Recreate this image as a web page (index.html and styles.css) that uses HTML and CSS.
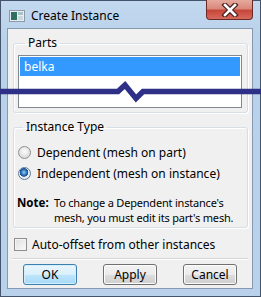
FILE: index.html
```html
<!DOCTYPE html>
<html lang="en">
<head>
    <meta charset="UTF-8">
    <title>Create Instance</title>
    <link rel="stylesheet" href="styles.css">
</head>
<body>
    <div class="window">
        <div class="titlebar">
            <svg class="app-icon" width="16" height="12" viewBox="0 0 16 12">
                <rect x="0.5" y="0.5" width="15" height="11" fill="#e8eef2" stroke="#8c9aa4"/>
                <rect x="2" y="2" width="6" height="8" fill="#2f6f62"/>
                <rect x="9" y="2" width="5" height="3" fill="#a9c3c8"/>
                <rect x="9" y="6" width="5" height="4" fill="#c8d8dc"/>
            </svg>
            <span class="title">Create Instance</span>
            <div class="close-btn">
                <svg width="20" height="14" viewBox="0 0 20 14">
                    <path d="M5 2 L15 12 M15 2 L5 12" stroke="#4a2020" stroke-width="5" stroke-linecap="square"/>
                    <path d="M5 2 L15 12 M15 2 L5 12" stroke="#ffffff" stroke-width="2.6" stroke-linecap="square"/>
                </svg>
            </div>
        </div>
        <div class="client">
            <fieldset class="group parts">
                <legend>Parts</legend>
                <ul class="listbox">
                    <li class="selected">belka</li>
                </ul>
            </fieldset>

            <fieldset class="group type">
                <legend>Instance Type</legend>
                <label class="option"><span class="radio"></span>Dependent (mesh on part)</label>
                <label class="option"><span class="radio checked"></span>Independent (mesh on instance)</label>
                <div class="note">
                    <b>Note:</b>
                    <span>To change a Dependent instance's<br>mesh, you must edit its part's mesh.</span>
                </div>
            </fieldset>

            <label class="option check-row"><span class="checkbox"></span>Auto-offset from other instances</label>

            <div class="separator"></div>

            <div class="buttons">
                <button class="btn btn-default">OK</button>
                <button class="btn">Apply</button>
                <button class="btn">Cancel</button>
            </div>
        </div>

        <!-- break mark drawn over the dialog -->
        <svg class="break-mark" width="261" height="24" viewBox="0 80 261 24">
            <path d="M0 91.5 H118 L125 85 L136 98.5 L143 91.5 H261" fill="none" stroke="#2d3086" stroke-width="5.5"/>
        </svg>
    </div>
</body>
</html>
```

FILE: styles.css
```css
body {
    margin: 0;
    padding: 0;
    font-family: "Noto Sans", sans-serif;
    font-size: 12px;
    color: #000;
}
.window {
    position: relative;
    box-sizing: border-box;
    width: 261px;
    height: 297px;
    border: 1px solid #44546a;
    background: linear-gradient(#c2d8ef, #b9d1ea 40px, #b9d1ea);
    padding: 0 7px 7px 6px;
    display: flex;
    flex-direction: column;
}
.titlebar {
    flex-shrink: 0;
    height: 27px;
    display: flex;
    align-items: center;
    position: relative;
}
.app-icon {
    margin: 3px 6px 0 2px;
}
.title {
    margin-top: 2px;
    font-size: 12px;
}
.close-btn {
    position: absolute;
    top: -1px;
    right: 0;
    width: 47px;
    height: 20px;
    box-sizing: border-box;
    border: 1px solid #6b2a25;
    border-top: none;
    border-radius: 0 0 4px 4px;
    background: linear-gradient(#e6aa9e, #d8897c 45%, #c7463a 55%, #d66a5c);
    display: flex;
    align-items: center;
    justify-content: center;
}
.client {
    flex: 1;
    min-height: 0;
    background: #f0f0f0;
    border: 1px solid #8699b0;
    padding: 0 4px 0 5px;
    display: flex;
    flex-direction: column;
}
.group {
    flex-shrink: 0;
    margin: 0;
    border: 1px solid #d5dfe5;
    border-radius: 3px;
    box-shadow: inset 1px 1px 0 #fff, 1px 1px 0 #fff;
}
.group legend {
    padding: 0 3px;
    margin-left: 7px;
    line-height: 16px;
}
.parts {
    margin-top: 6px;
    padding: 4px 5px 4px 4px;
}
.listbox {
    list-style: none;
    margin: 0;
    padding: 1px;
    height: 49px;
    border: 1px solid #828790;
    background: #fff;
}
.listbox li {
    height: 19px;
    line-height: 19px;
    padding-left: 4px;
}
.listbox .selected {
    background: #3399ff;
    color: #fff;
}
.type {
    margin-top: 6px;
    padding: 7px 4px 2px 2px;
}
.option {
    flex-shrink: 0;
    display: flex;
    align-items: center;
    height: 21px;
}
.radio {
    box-sizing: border-box;
    width: 13px;
    height: 13px;
    margin: 0 6px 0 2px;
    border-radius: 50%;
    border: 1px solid #8f8f8f;
    background: radial-gradient(circle at 50% 40%, #fdfdfd, #dcdcdc 70%, #c8c8c8);
}
.radio.checked {
    border-color: #5e7c99;
    background: radial-gradient(circle at 45% 40%, #9fd4f4 0, #2e7bc3 2.5px, #1d4f8a 4px, #e9eef2 4.6px, #d6dce1);
}
.note {
    display: grid;
    grid-template-columns: 38px 1fr;
    margin-top: 11px;
    line-height: 15px;
    white-space: nowrap;
}
.note b {
    padding-left: 1px;
    font-size: 11.5px;
}
.note span {
    font-size: 11px;
    letter-spacing: -0.2px;
}
.check-row {
    margin-top: 6px;
    padding-left: 1px;
}
.checkbox {
    box-sizing: border-box;
    width: 13px;
    height: 13px;
    margin-right: 5px;
    border: 1px solid #8f8f8f;
    background: linear-gradient(135deg, #dedede, #fbfbfb);
    box-shadow: inset 0 0 0 1px #f4f4f4;
}
.separator {
    flex-shrink: 0;
    margin: 3px 0 0 -1px;
    border-top: 1px solid #d5d5d5;
    border-bottom: 1px solid #fff;
}
.buttons {
    display: flex;
    gap: 26px;
    padding: 4px 0 0 10px;
}
.btn {
    width: 54px;
    height: 21px;
    padding: 0;
    font-family: "Noto Sans", sans-serif;
    font-size: 12px;
    border: 1px solid #707070;
    border-radius: 3px;
    background: linear-gradient(#f2f2f2, #ebebeb 50%, #dddddd 50%, #cfcfcf);
    box-shadow: inset 0 0 0 1px #fcfcfc;
}
.btn-default {
    border-color: #3c7fb1;
    background: linear-gradient(#eaf6fd, #d9f0fc 50%, #bee6fd 50%, #a7d9f5);
    box-shadow: inset 0 0 0 1px #d4effc;
}
.break-mark {
    position: absolute;
    left: -1px;
    top: 79px;
}
```
